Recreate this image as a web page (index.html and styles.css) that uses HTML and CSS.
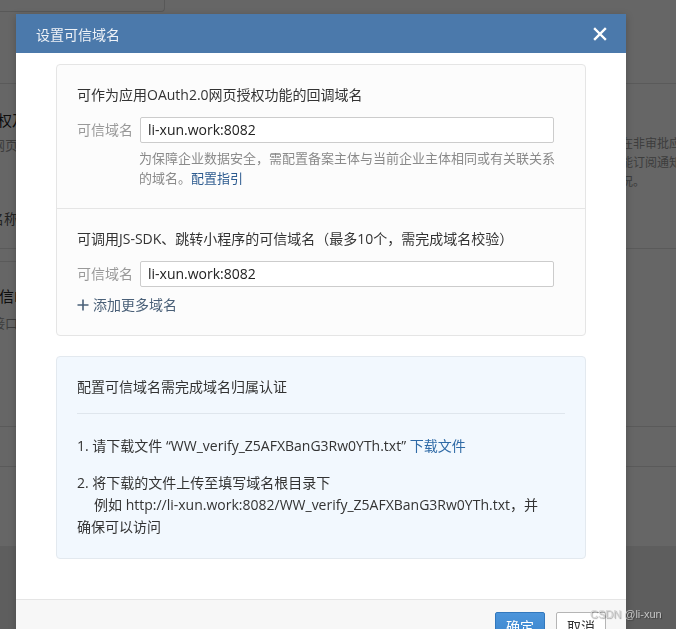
FILE: index.html
```html
<!DOCTYPE html>
<html lang="zh-CN">
<head>
<meta charset="utf-8">
<title>设置可信域名</title>
<link rel="stylesheet" href="styles.css">
</head>
<body>
<div class="page">
  <div class="bg-row r0"><div class="topbox"></div></div>
  <div class="bg-row r1"></div>
  <div class="bg-row r2">
    <div class="bg-left">
      <div class="bg-title t1">权及JS-SDK</div>
      <div class="bg-sub s1">网页授权</div>
      <div class="bg-name n1">名称</div>
    </div>
    <div class="bg-right">
      <div class="bg-desc">在非审批应用中<br>能订阅通知事件<br>况。</div>
    </div>
  </div>
  <div class="bg-row r3"><div class="bg-left line-left"></div></div>
  <div class="bg-row r4">
    <div class="bg-left">
      <div class="bg-title t2">信IP</div>
      <div class="bg-sub s2">接口</div>
    </div>
  </div>
  <div class="bg-row r5"></div>
  <div class="bg-row r6"></div>
  <div class="bg-row r7"></div>
</div>
<div class="overlay"></div>

<div class="dialog">
  <div class="dialog-head">
    <span class="dialog-title">设置可信域名</span>
    <svg class="close" width="14" height="14" viewBox="0 0 14 14"><path d="M2 2L12 12M12 2L2 12" stroke="#fff" stroke-width="2.4" stroke-linecap="square" fill="none"/></svg>
  </div>
  <div class="dialog-body">
    <div class="card">
      <div class="section">
        <div class="sec-title">可作为应用OAuth2.0网页授权功能的回调域名</div>
        <div class="field">
          <span class="label">可信域名</span>
          <div class="input">li-xun.work:8082</div>
        </div>
        <div class="hint">为保障企业数据安全，需配置备案主体与当前企业主体相同或有关联关系的域名。<span class="link-dark">配置指引</span></div>
      </div>
      <div class="section sep">
        <div class="sec-title">可调用JS-SDK、跳转小程序的可信域名（最多10个，需完成域名校验）</div>
        <div class="field">
          <span class="label">可信域名</span>
          <div class="input">li-xun.work:8082</div>
        </div>
        <div class="add"><svg width="12" height="12" viewBox="0 0 12 12"><path d="M6 0.5V11.5M0.5 6H11.5" stroke="#4a6078" stroke-width="1.6" fill="none"/></svg><span>添加更多域名</span></div>
      </div>
    </div>
    <div class="verify">
      <div class="v-title">配置可信域名需完成域名归属认证</div>
      <div class="v-line"></div>
      <div class="v-item">1. 请下载文件 “WW_verify_Z5AFXBanG3Rw0YTh.txt” <span class="link">下载文件</span></div>
      <div class="v-item v-item2">2. 将下载的文件上传至填写域名根目录下<br><span class="indent">例如 http://li-xun.work:8082/WW_verify_Z5AFXBanG3Rw0YTh.txt，并</span><br>确保可以访问</div>
    </div>
  </div>
  <div class="dialog-foot">
    <button class="btn btn-primary">确定</button>
    <button class="btn btn-default">取消</button>
  </div>
</div>
<div class="watermark">CSDN @li-xun</div>
</body>
</html>
```

FILE: styles.css
```css
html, body {
  margin: 0;
  padding: 0;
  height: 100%;
  overflow: hidden;
}
body {
  font-family: "Open Sans", "Noto Sans CJK SC", sans-serif;
  background: #fff;
  color: #333;
}
.page {
  display: flex;
  flex-direction: column;
  height: 100%;
}
.bg-row {
  display: flex;
  flex-shrink: 0;
}
.r0 { height: 12px; }
.topbox {
  width: 164px;
  height: 11px;
  border-right: 1px solid #dcdcdc;
  border-bottom: 1px solid #dcdcdc;
  border-bottom-right-radius: 4px;
}
.r1 { height: 71px; border-bottom: 1px solid #e2e2e2; }
.r2 { height: 164px; border-bottom: 1px solid #e2e2e2; }
.r3 { height: 13px; }
.line-left { width: 338px; border-bottom: 1px solid #e2e2e2; }
.r4 { height: 164px; border-bottom: 1px solid #e2e2e2; }
.r5 { height: 39px; border-bottom: 1px solid #e2e2e2; }
.r6 { height: 79px; }
.r7 { flex: 1; background: #ececec; }
.bg-left {
  width: 338px;
  display: flex;
  flex-direction: column;
  overflow: hidden;
}
.bg-right {
  width: 338px;
  padding-left: 283px;
  box-sizing: border-box;
  overflow: hidden;
}
.bg-title { font-size: 15px; line-height: 20px; color: #222; white-space: nowrap; }
.bg-sub { font-size: 13px; line-height: 18px; color: #999; white-space: nowrap; }
.bg-name { font-size: 14px; line-height: 20px; color: #555; white-space: nowrap; }
.t1 { margin-top: 26px; margin-left: -3px; }
.s1 { margin-top: 6px; margin-left: -8px; }
.n1 { margin-top: 55px; margin-left: -10px; }
.t2 { margin-top: 24px; margin-left: -1px; }
.s2 { margin-top: 8px; margin-left: -8px; }
.bg-desc {
  font-size: 12px;
  line-height: 19px;
  color: #999;
  white-space: nowrap;
  margin-top: 50px;
}
.overlay {
  position: fixed;
  inset: 0;
  background: rgba(0, 0, 0, 0.6);
}

.dialog {
  position: absolute;
  left: 16px;
  top: 14px;
  width: 610px;
  background: #fff;
  box-shadow: 0 2px 8px rgba(0,0,0,0.2);
}
.dialog-head {
  height: 39px;
  background: #4b79ab;
  display: flex;
  align-items: center;
  justify-content: space-between;
  padding: 0 19px 0 20px;
}
.dialog-title {
  color: #eef2f7;
  font-size: 14px;
}
.close { display: block; }
.dialog-body {
  padding: 11px 40px 40px 40px;
}
.card {
  border: 1px solid #e5e5e5;
  border-radius: 4px;
  background: #fcfcfc;
}
.section {
  padding: 20px 20px 20px 20px;
}
.section.sep {
  border-top: 1px solid #e5e5e5;
}
.sec-title {
  font-size: 14px;
  line-height: 20px;
  color: #333;
}
.field {
  display: flex;
  align-items: center;
  margin-top: 12px;
}
.label {
  width: 63px;
  flex-shrink: 0;
  font-size: 14px;
  color: #999;
  line-height: 20px;
}
.input {
  width: 405px;
  height: 24px;
  border: 1px solid #cccccc;
  border-radius: 2px;
  background: #fff;
  box-sizing: content-box;
  padding: 0 0 0 7px;
  font-size: 14px;
  line-height: 24px;
  color: #222;
}
.hint {
  margin-left: 62px;
  margin-top: 5px;
  font-size: 13px;
  line-height: 20px;
  color: #8a8a8a;
  width: 420px;
}
.link-dark { color: #2d5b8f; }
.add {
  display: flex;
  align-items: center;
  gap: 4px;
  margin-top: 8px;
  font-size: 14px;
  line-height: 20px;
  color: #4a6078;
}
.add svg { display: block; }
.verify {
  margin-top: 20px;
  border: 1px solid #e3e9ef;
  border-radius: 4px;
  background: #f2f8fe;
  padding: 20px 20px 20px 20px;
}
.v-title {
  font-size: 14px;
  line-height: 20px;
  color: #333;
}
.v-line {
  height: 1px;
  background: #dfe6ed;
  margin-top: 16px;
}
.v-item {
  font-size: 14px;
  line-height: 22px;
  color: #333;
  margin-top: 21px;
}
.v-item2 { margin-top: 15px; }
.indent { padding-left: 17px; }
.link { color: #2f6aa6; }
.dialog-foot {
  height: 60px;
  background: #f7f7f7;
  border-top: 1px solid #e5e5e5;
  display: flex;
  justify-content: flex-end;
  align-items: flex-start;
  gap: 11px;
  padding: 12px 20px 0 0;
}
.btn {
  width: 50px;
  height: 28px;
  font-family: inherit;
  font-size: 14px;
  border-radius: 2px;
  padding: 0;
  margin: 0;
}
.btn-primary {
  background: linear-gradient(#4c95db, #3a84cc);
  border: 1px solid #3278bd;
  color: #fff;
}
.btn-default {
  background: #fff;
  border: 1px solid #b5b5b5;
  color: #333;
}
.watermark {
  position: absolute;
  left: 590px;
  top: 606px;
  font-family: "Liberation Sans", "DejaVu Sans", sans-serif;
  font-size: 11px;
  line-height: 16px;
  color: rgba(210, 210, 210, 0.9);
  text-shadow: 1px 1px 1px rgba(0, 0, 0, 0.35);
  white-space: nowrap;
}
```
